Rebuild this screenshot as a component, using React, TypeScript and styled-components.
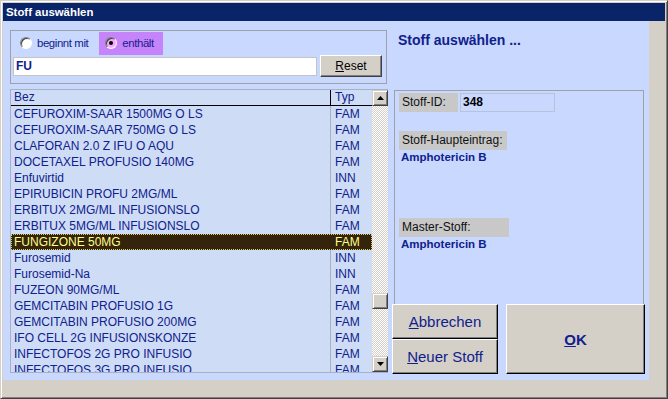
import React from 'react';
import styled, { createGlobalStyle } from 'styled-components';

const GlobalStyle = createGlobalStyle`
  html, body {
    margin: 0;
    padding: 0;
    background: #d4d0c8;
  }
  body {
    font-family: "Liberation Sans", Arial, sans-serif;
  }
`;

const NAVY = '#10208c';

const Window = styled.div`
  width: 668px;
  height: 399px;
  box-sizing: border-box;
  display: flex;
  flex-direction: column;
  background: #d4d0c8;
  border: 1px solid;
  border-color: #d4d0c8 #404040 #404040 #d4d0c8;
  box-shadow: inset 1px 1px 0 #fff, inset -1px -1px 0 #808080;
  padding: 2px;
`;

const TitleBar = styled.div`
  height: 18px;
  flex: none;
  display: flex;
  align-items: center;
  padding-left: 3px;
  background: #0a246a;
  color: #fff;
  font-size: 11.4px;
  font-weight: 700;
`;

const Body = styled.div`
  flex: 1;
  display: flex;
  padding: 0 16px 16px 0;
  min-height: 0;
`;

const Client = styled.div`
  flex: 1;
  display: flex;
  gap: 4px;
  padding: 9px 4px 6px 7px;
  background: #c8d8ff;
`;

const LeftCol = styled.div`
  width: 378px;
  display: flex;
  flex-direction: column;
  gap: 5px;
`;

const GroupBox = styled.div`
  width: 377px;
  height: 54px;
  box-sizing: border-box;
  border: 1px solid #a0a0a8;
  display: flex;
  flex-direction: column;
  padding-top: 1px;
`;

const RadioRow = styled.div`
  height: 23px;
  display: flex;
  gap: 2px;
  padding-left: 3px;
`;

const RadioOption = styled.label<{ $active?: boolean }>`
  display: flex;
  align-items: center;
  gap: 5px;
  padding: 0 9px 2px 6px;
  background: ${p => (p.$active ? '#c684fb' : 'transparent')};
  color: ${NAVY};
  font-size: 11.4px;
  letter-spacing: -0.4px;
`;

const RadioDot = styled.span<{ $checked?: boolean; $tint?: string }>`
  width: 12px;
  height: 12px;
  box-sizing: border-box;
  border-radius: 50%;
  border: 1px solid;
  border-color: #808080 #fff #fff #808080;
  box-shadow: inset 1px 1px 0 #404040;
  background: ${p => p.$tint || '#fff'};
  display: flex;
  align-items: center;
  justify-content: center;

  &::after {
    content: '';
    width: 4px;
    height: 4px;
    border-radius: 50%;
    background: #000;
    display: ${p => (p.$checked ? 'block' : 'none')};
  }
`;

const InputRow = styled.div`
  height: 22px;
  display: flex;
  align-items: center;
  gap: 3px;
  padding-left: 2px;
`;

const SearchField = styled.div`
  width: 304px;
  height: 19px;
  box-sizing: border-box;
  border: 1px solid #c4c4c4;
  background: #fff;
  color: ${NAVY};
  font-size: 12px;
  font-weight: 700;
  padding-left: 2px;
  display: flex;
  align-items: center;
`;

const SmallButton = styled.div`
  width: 62px;
  height: 22px;
  box-sizing: border-box;
  background: #d4d0c8;
  border: 1px solid;
  border-color: #fff #404040 #404040 #fff;
  box-shadow: inset -1px -1px 0 #808080;
  display: flex;
  align-items: center;
  justify-content: center;
  font-size: 12px;
  color: #000;
`;

const List = styled.div`
  flex: 1;
  margin-bottom: 1px;
  display: flex;
  border: 1px solid #a8b0c4;
  border-right: none;
  background: #cedcf6;
  min-height: 0;
`;

const Table = styled.div`
  flex: 1;
  display: flex;
  flex-direction: column;
  overflow: hidden;
`;

const HeaderRow = styled.div`
  height: 15px;
  flex: none;
  display: grid;
  grid-template-columns: 320px 1fr;
  border-bottom: 1px solid #000;
  color: ${NAVY};
  font-size: 12px;
  line-height: 15px;
`;

const HeaderCell = styled.div<{ $first?: boolean }>`
  padding-left: ${p => (p.$first ? '3px' : '4px')};
  border-right: ${p => (p.$first ? '1px solid #000' : 'none')};
`;

const Row = styled.div<{ $selected?: boolean }>`
  height: 16px;
  flex: none;
  display: grid;
  grid-template-columns: 320px 1fr;
  font-size: 12px;
  line-height: 16px;
  color: ${p => (p.$selected ? '#ffff88' : NAVY)};
  background: ${p => (p.$selected ? '#34240c' : 'transparent')};
  outline: ${p => (p.$selected ? '1px dotted #d8d070' : 'none')};
  outline-offset: -1px;
  white-space: nowrap;
`;

const Cell = styled.div<{ $first?: boolean; $selected?: boolean }>`
  padding-left: ${p => (p.$first ? '3px' : '4px')};
  border-right: ${p => (p.$first && !p.$selected ? '1px solid #a8b0c4' : p.$first ? '1px solid transparent' : 'none')};
  overflow: hidden;
`;

const ScrollBar = styled.div`
  width: 16px;
  flex: none;
  display: flex;
  flex-direction: column;
  background: repeating-conic-gradient(#d4d0c8 0 25%, #fff 0 50%) 0 0 / 2px 2px;
`;

const ScrollButton = styled.div`
  width: 16px;
  height: 16px;
  box-sizing: border-box;
  flex: none;
  background: #d4d0c8;
  border: 1px solid;
  border-color: #d4d0c8 #404040 #404040 #d4d0c8;
  box-shadow: inset 1px 1px 0 #fff, inset -1px -1px 0 #808080;
  display: flex;
  align-items: center;
  justify-content: center;
`;

const TrackGap = styled.div<{ $h?: number }>`
  flex: ${p => (p.$h ? 'none' : '1')};
  height: ${p => (p.$h ? `${p.$h}px` : 'auto')};
`;

const RightCol = styled.div`
  flex: 1;
  display: flex;
  flex-direction: column;
`;

const Heading = styled.div`
  height: 60px;
  flex: none;
  padding: 2px 0 0 6px;
  box-sizing: border-box;
  color: ${NAVY};
  font-size: 14px;
  font-weight: 700;
`;

const InfoPanel = styled.div`
  flex: 1;
  margin: 0 1px 0 2px;
  border: 1px solid #a0a0a8;
  border-bottom: none;
  padding: 2px 0 0 4px;
  display: flex;
  flex-direction: column;
  align-items: flex-start;
`;

const IdRow = styled.div`
  display: flex;
  gap: 2px;
`;

const Label = styled.div<{ $w: number; $mt?: number }>`
  width: ${p => p.$w}px;
  height: 19px;
  margin-top: ${p => p.$mt || 0}px;
  box-sizing: border-box;
  background: #c8c8c8;
  color: #101010;
  font-size: 12px;
  line-height: 19px;
  padding-left: 3px;
`;

const IdValue = styled.div`
  width: 95px;
  height: 19px;
  box-sizing: border-box;
  border: 1px solid #b8c2dc;
  font-size: 12px;
  font-weight: 700;
  color: #000;
  line-height: 17px;
  padding-left: 2px;
`;

const Value = styled.div`
  height: 14px;
  line-height: 14px;
  padding-left: 2px;
  color: ${NAVY};
  font-size: 11.5px;
  font-weight: 700;
`;

const ButtonArea = styled.div`
  height: 70px;
  flex: none;
  display: flex;
  gap: 8px;
`;

const ButtonStack = styled.div`
  width: 106px;
  display: flex;
  flex-direction: column;
`;

const BigButton = styled.div<{ $bold?: boolean }>`
  flex: 1;
  box-sizing: border-box;
  background: #d4d0c8;
  border: 1px solid;
  border-color: #fff #000 #000 #fff;
  box-shadow: inset -1px -1px 0 #808080;
  display: flex;
  align-items: center;
  justify-content: center;
  color: ${NAVY};
  font-size: 15px;
  font-weight: ${p => (p.$bold ? 700 : 400)};
`;

const rows: [string, string][] = [
  ['CEFUROXIM-SAAR 1500MG O LS', 'FAM'],
  ['CEFUROXIM-SAAR 750MG O LS', 'FAM'],
  ['CLAFORAN 2.0 Z IFU O AQU', 'FAM'],
  ['DOCETAXEL PROFUSIO 140MG', 'FAM'],
  ['Enfuvirtid', 'INN'],
  ['EPIRUBICIN PROFU 2MG/ML', 'FAM'],
  ['ERBITUX 2MG/ML INFUSIONSLO', 'FAM'],
  ['ERBITUX 5MG/ML INFUSIONSLO', 'FAM'],
  ['FUNGIZONE 50MG', 'FAM'],
  ['Furosemid', 'INN'],
  ['Furosemid-Na', 'INN'],
  ['FUZEON 90MG/ML', 'FAM'],
  ['GEMCITABIN PROFUSIO 1G', 'FAM'],
  ['GEMCITABIN PROFUSIO 200MG', 'FAM'],
  ['IFO CELL 2G INFUSIONSKONZE', 'FAM'],
  ['INFECTOFOS 2G PRO INFUSIO', 'FAM'],
  ['INFECTOFOS 3G PRO INFUSIO', 'FAM'],
];

const Arrow = ({ down }: { down?: boolean }) => (
  <svg width="7" height="4" viewBox="0 0 7 4">
    <path d={down ? 'M0 0H7L3.5 4Z' : 'M0 4H7L3.5 0Z'} fill="#000" />
  </svg>
);

export default function App() {
  return (
    <>
      <GlobalStyle />
      <Window>
        <TitleBar>Stoff auswählen</TitleBar>
        <Body>
          <Client>
            <LeftCol>
              <GroupBox>
                <RadioRow>
                  <RadioOption>
                    <RadioDot />
                    beginnt mit
                  </RadioOption>
                  <RadioOption $active>
                    <RadioDot $checked $tint="#f4a8ff" />
                    enthält
                  </RadioOption>
                </RadioRow>
                <InputRow>
                  <SearchField>FU</SearchField>
                  <SmallButton>
                    <span><u>R</u>eset</span>
                  </SmallButton>
                </InputRow>
              </GroupBox>

              <List>
                <Table>
                  <HeaderRow>
                    <HeaderCell $first>Bez</HeaderCell>
                    <HeaderCell>Typ</HeaderCell>
                  </HeaderRow>
                  {rows.map(([bez, typ]) => {
                    const sel = bez === 'FUNGIZONE 50MG';
                    return (
                      <Row key={bez} $selected={sel}>
                        <Cell $first $selected={sel}>{bez}</Cell>
                        <Cell>{typ}</Cell>
                      </Row>
                    );
                  })}
                </Table>
                <ScrollBar>
                  <ScrollButton><Arrow /></ScrollButton>
                  <TrackGap $h={187} />
                  <ScrollButton />
                  <TrackGap />
                  <ScrollButton><Arrow down /></ScrollButton>
                </ScrollBar>
              </List>
            </LeftCol>

            <RightCol>
              <Heading>Stoff auswählen ...</Heading>
              <InfoPanel>
                <IdRow>
                  <Label $w={59}>Stoff-ID:</Label>
                  <IdValue>348</IdValue>
                </IdRow>
                <Label $w={108} $mt={19}>Stoff-Haupteintrag:</Label>
                <Value>Amphotericin B</Value>
                <Label $w={110} $mt={54}>Master-Stoff:</Label>
                <Value>Amphotericin B</Value>
              </InfoPanel>
              <ButtonArea>
                <ButtonStack>
                  <BigButton><span><u>A</u>bbrechen</span></BigButton>
                  <BigButton><span><u>N</u>euer Stoff</span></BigButton>
                </ButtonStack>
                <BigButton $bold><span><u>O</u>K</span></BigButton>
              </ButtonArea>
            </RightCol>
          </Client>
        </Body>
      </Window>
    </>
  );
}
